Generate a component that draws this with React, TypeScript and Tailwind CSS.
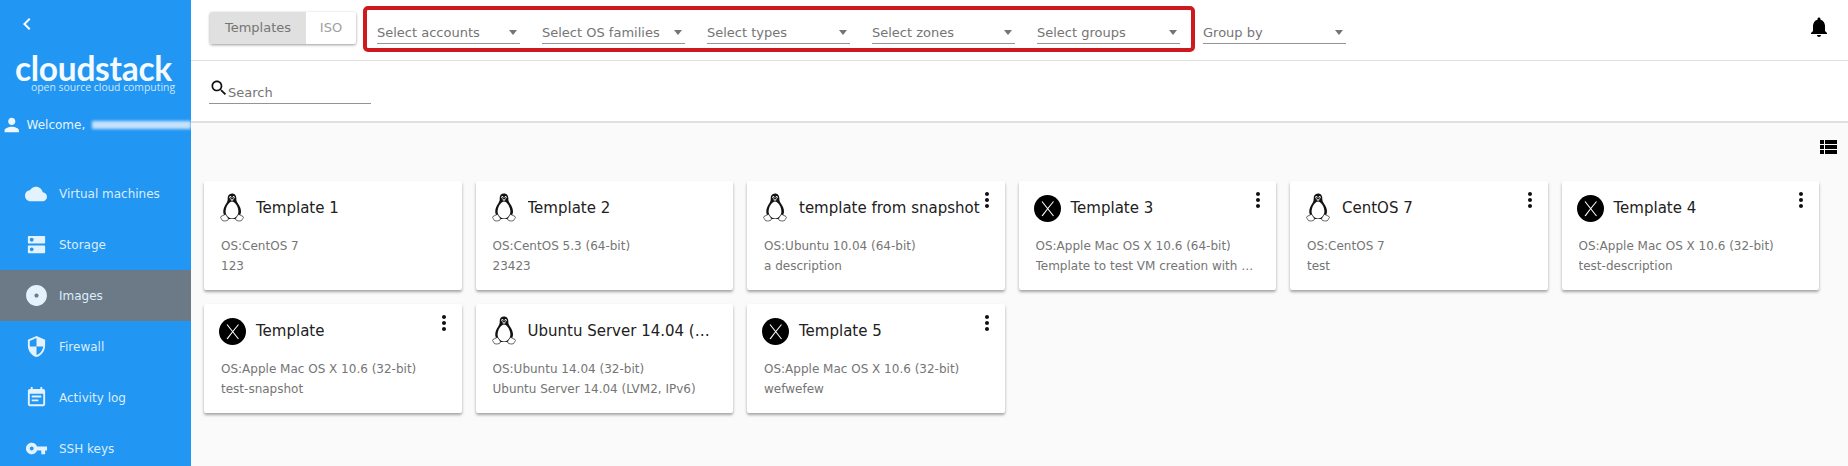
import React from "react";

const P = {
  cloud: "M19.35 10.04C18.67 6.59 15.64 4 12 4 9.11 4 6.6 5.64 5.35 8.04 2.34 8.36 0 10.91 0 14c0 3.31 2.69 6 6 6h13c2.76 0 5-2.24 5-5 0-2.64-2.05-4.78-4.65-4.96z",
  dns: "M20 13H4c-.55 0-1 .45-1 1v6c0 .55.45 1 1 1h16c.55 0 1-.45 1-1v-6c0-.55-.45-1-1-1zM7 19c-1.1 0-2-.9-2-2s.9-2 2-2 2 .9 2 2-.9 2-2 2zM20 3H4c-.55 0-1 .45-1 1v6c0 .55.45 1 1 1h16c.55 0 1-.45 1-1V4c0-.55-.45-1-1-1zM7 9c-1.1 0-2-.9-2-2s.9-2 2-2 2 .9 2 2-.9 2-2 2z",
  disc: "M12 2C6.48 2 2 6.48 2 12s4.48 10 10 10 10-4.48 10-10S17.52 2 12 2zm0 12c-1.1 0-2-.9-2-2s.9-2 2-2 2 .9 2 2-.9 2-2 2z",
  shield: "M12 1L3 5v6c0 5.55 3.84 10.74 9 12 5.16-1.26 9-6.45 9-12V5l-9-4zm0 10.99h7c-.53 4.12-3.28 7.79-7 8.94V12H5V6.3l7-3.11v8.8z",
  event: "M17 10H7v2h10v-2zm2-7h-1V1h-2v2H8V1H6v2H5c-1.11 0-1.99.9-1.99 2L3 19c0 1.1.89 2 2 2h14c1.1 0 2-.9 2-2V5c0-1.1-.9-2-2-2zm0 16H5V8h14v11zm-5-5H7v2h7v-2z",
  key: "M12.65 10C11.83 7.67 9.61 6 7 6c-3.31 0-6 2.69-6 6s2.69 6 6 6c2.61 0 4.83-1.67 5.65-4H17v4h4v-4h2v-4H12.65zM7 14c-1.1 0-2-.9-2-2s.9-2 2-2 2 .9 2 2-.9 2-2 2z",
  person: "M12 12c2.21 0 4-1.79 4-4s-1.79-4-4-4-4 1.79-4 4 1.79 4 4 4zm0 2c-2.67 0-8 1.34-8 4v2h16v-2c0-2.66-5.33-4-8-4z",
  bell: "M12 22c1.1 0 2-.9 2-2h-4c0 1.1.89 2 2 2zm6-6v-5c0-3.07-1.64-5.64-4.5-6.32V4c0-.83-.67-1.5-1.5-1.5s-1.5.67-1.5 1.5v.68C7.63 5.36 6 7.92 6 11v5l-2 2v1h16v-1l-2-2z",
  list: "M4 14h4v-4H4v4zm0 5h4v-4H4v4zM4 9h4V5H4v4zm5 5h12v-4H9v4zm0 5h12v-4H9v4zM9 5v4h12V5H9z",
  search: "M15.5 14h-.79l-.28-.27C15.41 12.59 16 11.11 16 9.5 16 5.91 13.09 3 9.5 3S3 5.91 3 9.5 5.91 16 9.5 16c1.61 0 3.09-.59 4.23-1.57l.27.28v.79l5 4.99L20.49 19l-4.99-5zm-6 0C7.01 14 5 11.99 5 9.5S7.01 5 9.5 5 14 7.01 14 9.5 11.99 14 9.5 14z",
  left: "M15.41 7.41L14 6l-6 6 6 6 1.41-1.41L10.83 12z",
  more: "M12 8c1.1 0 2-.9 2-2s-.9-2-2-2-2 .9-2 2 .9 2 2 2zm0 2c-1.1 0-2 .9-2 2s.9 2 2 2 2-.9 2-2-.9-2-2-2zm0 6c-1.1 0-2 .9-2 2s.9 2 2 2 2-.9 2-2-.9-2-2-2z",
};

function Icon({ d, className }: { d: string; className?: string }) {
  return (
    <svg viewBox="0 0 24 24" className={className} fill="currentColor">
      <path d={d} />
    </svg>
  );
}

function Tux() {
  return (
    <svg viewBox="0 0 24 30" className="-ml-[1px] h-[30px] w-[24px] shrink-0">
      <path d="M12 0.5c-3 0-4.400 2.200-4.300 5 .1 2-.3 3.200-1.500 5C4.500 13 3 16 3.300 19.500 3.500 22 5.500 25 8 26h8c2.500-1 4.800-4 5-7 .2-3.300-1.500-6.200-3.200-8.700-1.200-1.800-1.500-3-1.500-4.800C16.300 2.700 15 .5 12 .5z" fill="#111" />
      <path d="M12 8.500c-2.900 0-6.400 5.500-6.400 10 0 4 3.100 7 6.400 7s6.400-3 6.400-7c0-4.500-3.500-10-6.400-10z" fill="#fff" />
      <ellipse cx="10.400" cy="4.300" rx="1" ry="1.400" fill="#fff" />
      <ellipse cx="13.600" cy="4.300" rx="1" ry="1.400" fill="#fff" />
      <circle cx="10.600" cy="4.500" r=".5" fill="#111" />
      <circle cx="13.400" cy="4.500" r=".5" fill="#111" />
      <path d="M9.800 6.500L12 5.800l2.200.7L12 8.300z" fill="#ddd" stroke="#111" strokeWidth=".4" />
      <path d="M5 21.500c-1.200.8-3 1.200-4 2-.8.7-.4 1.300.2 2 .7.8.6 2 1.800 2.300 1.600.4 4 .1 5-.8.800-.8.300-2-.5-3-.7-.9-1.300-2.700-2.500-2.500z" fill="#fff" stroke="#222" strokeWidth=".7" />
      <path d="M19 21.500c1.200.8 3 1.200 4 2 .8.700.4 1.300-.2 2-.7.800-.6 2-1.800 2.300-1.600.4-4 .1-5-.8-.8-.8-.3-2 .5-3 .7-.9 1.300-2.700 2.500-2.500z" fill="#fff" stroke="#222" strokeWidth=".7" />
    </svg>
  );
}

function MacX() {
  return (
    <svg viewBox="0 0 27 27" className="-ml-[2px] h-[27px] w-[27px] shrink-0">
      <circle cx="13.500" cy="13.500" r="13.500" fill="#000" />
      <path d="M8 6.500L19.500 21M19.500 6.500C16.500 10 11.500 16.500 8 21" stroke="#fff" strokeWidth="1.100" fill="none" />
    </svg>
  );
}

function Select({ label }: { label: string }) {
  return (
    <div className="flex h-[30px] w-[143px] items-center justify-between border-b border-[#949494] pt-[8px] pr-[3px] text-[13px] text-[#757575]">
      <span>{label}</span>
      <span className="h-0 w-0 border-x-[4px] border-t-[5px] border-x-transparent border-t-[#757575]" />
    </div>
  );
}

const nav = [
  { label: "Virtual machines", d: P.cloud, size: "h-[22px] w-[22px]" },
  { label: "Storage", d: P.dns },
  { label: "Images", d: P.disc, size: "h-[25px] w-[25px]", active: true },
  { label: "Firewall", d: P.shield },
  { label: "Activity log", d: P.event },
  { label: "SSH keys", d: P.key },
];

const cards = [
  { t: "Template 1", os: "CentOS 7", d: "123", i: "l" },
  { t: "Template 2", os: "CentOS 5.3 (64-bit)", d: "23423", i: "l" },
  { t: "template from snapshot", os: "Ubuntu 10.04 (64-bit)", d: "a description", i: "l", m: true },
  { t: "Template 3", os: "Apple Mac OS X 10.6 (64-bit)", d: "Template to test VM creation with extended data", i: "m", m: true },
  { t: "CentOS 7", os: "CentOS 7", d: "test", i: "l", m: true },
  { t: "Template 4", os: "Apple Mac OS X 10.6 (32-bit)", d: "test-description", i: "m", m: true },
  { t: "Template", os: "Apple Mac OS X 10.6 (32-bit)", d: "test-snapshot", i: "m", m: true },
  { t: "Ubuntu Server 14.04 (LVM2, IPv6)", os: "Ubuntu 14.04 (32-bit)", d: "Ubuntu Server 14.04 (LVM2, IPv6)", i: "l" },
  { t: "Template 5", os: "Apple Mac OS X 10.6 (32-bit)", d: "wefwefew", i: "m", m: true },
];

export default function App() {
  return (
    <div className="flex h-[466px] w-[1848px] overflow-hidden bg-[#fafafa] font-['DejaVu_Sans',sans-serif]">
      <aside className="h-full w-[191px] shrink-0 overflow-hidden bg-[#2196f3] text-white">
        <div className="pl-[15px] pt-[12px]">
          <Icon d={P.left} className="h-[24px] w-[24px]" />
        </div>
        <div className="mt-[13px] pl-[15px] font-['Lato',sans-serif] text-[33.500px] font-bold leading-[38px] tracking-[-0.3px] text-[#f5faff]">
          cloudstack
        </div>
        <div className="-mt-[6px] pl-[31px] font-['Open_Sans',sans-serif] text-[10.400px] leading-[12px] text-[#cfe7fb]">
          open source cloud computing
        </div>
        <div className="mt-[20px] flex h-[24px] items-center">
          <Icon d={P.person} className="ml-[1px] h-[22px] w-[22px] text-[#eef7fe]" />
          <span className="ml-[4px] text-[12px] text-[#e8f4fe]">Welcome,</span>
          <span className="ml-[7px] h-[8px] w-[101px] bg-[#c5e2fb] blur-[1.500px]" />
        </div>
        <nav className="mt-[31px] flex flex-col">
          {nav.map((n) => (
            <div key={n.label} className={`flex h-[51px] shrink-0 items-center text-[12px] text-[#dcedfc] ${n.active ? "bg-[#6c7a87]" : ""}`}>
              <div className="flex w-[59px] justify-center pl-[13px] text-[#e3f2fd]">
                <Icon d={n.d} className={n.size ?? "h-[23px] w-[23px]"} />
              </div>
              <span>{n.label}</span>
            </div>
          ))}
        </nav>
      </aside>

      <main className="flex min-w-0 flex-1 flex-col">
        <header className="flex h-[61px] shrink-0 items-start border-b border-[#e0e0e0] bg-white pl-[19px]">
          <div className="mt-[12px] flex h-[32px] rounded-[2px] bg-white text-[13px] shadow-[0_1px_3px_rgba(0,0,0,0.4)]">
            <div className="flex w-[96px] items-center justify-center rounded-l-[2px] bg-[#e0e0e0] text-[#757575]">Templates</div>
            <div className="flex w-[50px] items-center justify-center text-[#a0a0a0]">ISO</div>
          </div>
          <div className="ml-[7px] mt-[6px] flex h-[46px] w-[832px] gap-[22px] rounded-[5px] border-4 border-[#cc1a1f] pl-[10px] pt-[4px]">
            <Select label="Select accounts" />
            <Select label="Select OS families" />
            <Select label="Select types" />
            <Select label="Select zones" />
            <Select label="Select groups" />
          </div>
          <div className="ml-[8px] mt-[14px]">
            <Select label="Group by" />
          </div>
          <Icon d={P.bell} className="ml-auto mr-[17px] mt-[15px] h-[24px] w-[24px] text-black" />
        </header>

        <div className="h-[62px] shrink-0 border-b-2 border-[#e0e0e0] bg-white pl-[18px] pt-[16px]">
          <div className="flex h-[27px] w-[162px] border-b border-[#949494]">
            <Icon d={P.search} className="mt-[1px] h-[20px] w-[20px] text-[#111]" />
            <span className="-ml-[1px] pt-[6px] text-[13px] leading-[20px] text-[#757575]">Search</span>
          </div>
        </div>

        <div className="flex justify-end pr-[8px] pt-[12px]">
          <Icon d={P.list} className="h-[24px] w-[24px] text-black" />
        </div>

        <div className="mt-[22px] grid grid-cols-6 gap-[14px] pl-[13px] pr-[29px]">
          {cards.map((c) => (
            <div key={c.t} className="relative h-[109px] rounded-[2px] bg-white pl-[17px] shadow-[0_2px_3px_rgba(0,0,0,0.35)]">
              <div className="flex h-[54px] items-center">
                <div className="flex w-[35px] shrink-0 justify-start">{c.i === "l" ? <Tux /> : <MacX />}</div>
                <div className={`max-w-[186px] text-[15px] ${c.m ? "whitespace-nowrap" : "truncate"} text-[#212121]`}>{c.t}</div>
              </div>
              <div className="mt-[1px] w-[220px] text-[12px] leading-[20px] text-[#757575]">
                <div className="truncate">OS:{c.os}</div>
                <div className="truncate">{c.d}</div>
              </div>
              {c.m && <Icon d={P.more} className="absolute right-[6px] top-[7px] h-[24px] w-[24px] text-[#111]" />}
            </div>
          ))}
        </div>
      </main>
    </div>
  );
}
